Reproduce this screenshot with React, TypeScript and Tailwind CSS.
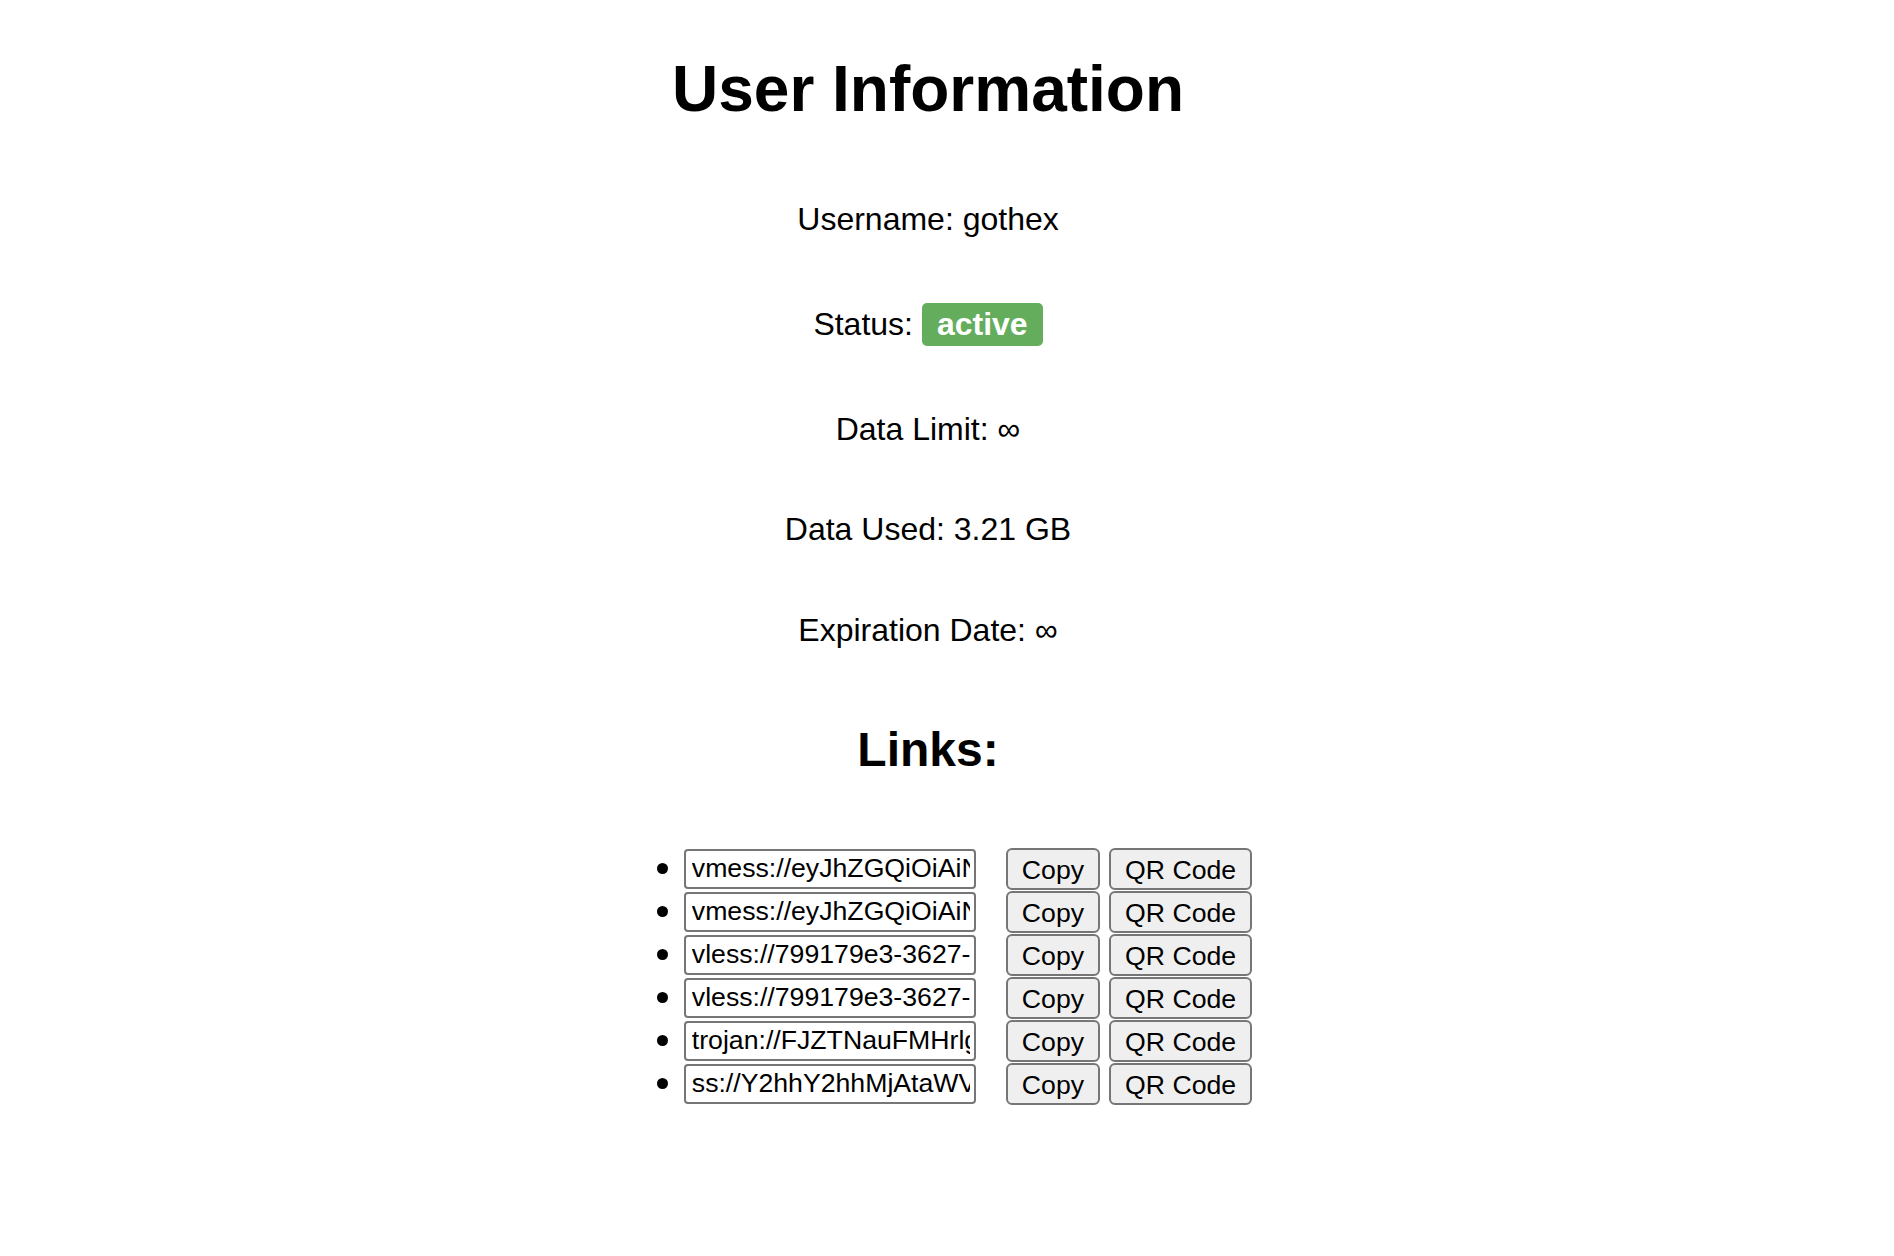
import React from 'react'

const links = [
  'vmess://eyJhZGQiOiAiNDUuMTU5LjIxLjE4MCIsICJhaWQiOiAiMCIsICJob3N0IjogIiJ9',
  'vmess://eyJhZGQiOiAiNDUuMTU5LjIxLjE4MCIsICJhaWQiOiAiMCIsICJob3N0IjogIiJ9',
  'vless://799179e3-3627-4d0a-9f8e-1a2b3c4d5e6f@45.159.21.180:443?security=tls',
  'vless://799179e3-3627-4d0a-9f8e-1a2b3c4d5e6f@45.159.21.180:8443?security=none',
  'trojan://FJZTNauFMHrlgQ2x@45.159.21.180:443?security=tls',
  'ss://Y2hhY2hhMjAtaWV0Zi1wb2x5MTMwNTpGSlpUTmF1Rk1IcmxnUTJ4@45.159.21.180:1080',
]

function InfoRow({ label, value }: { label: string; value: string }) {
  return (
    <p className="text-[32px] leading-[37px]">
      {label}: {value}
    </p>
  )
}

export default function App() {
  return (
    <div
      className="min-h-screen w-full bg-white text-black flex flex-col items-center pr-[38px]"
      style={{ fontFamily: '"Liberation Sans", Arial, Helvetica, sans-serif' }}
    >
      <h1 className="mt-[52px] text-[64px] leading-[74px] font-bold">User Information</h1>

      <div className="mt-[75px]">
        <InfoRow label="Username" value="gothex" />
      </div>

      {/* status row, badge sits on the text baseline */}
      <p className="mt-[65px] text-[32px] leading-[37px]">
        Status:{' '}
        <span className="inline-block align-baseline rounded-[5px] bg-[#64ad5d] text-white font-bold text-[32px] leading-[37px] pt-[3px] pb-[3px] px-[15px]">
          active
        </span>
      </p>

      <div className="mt-[65px]">
        <InfoRow label="Data Limit" value="∞" />
      </div>
      <div className="mt-[63px]">
        <InfoRow label="Data Used" value="3.21 GB" />
      </div>
      <div className="mt-[64px]">
        <InfoRow label="Expiration Date" value="∞" />
      </div>

      <h2 className="mt-[73px] text-[48px] leading-[55px] font-bold">Links:</h2>

      <ul className="mt-[70px] pl-[80px] flex flex-col">
        {links.map((link, i) => (
          <li key={i} className="h-[43px] flex items-center">
            <span className="w-[11px] h-[11px] rounded-full bg-black -ml-[27px] mr-[16px]" />
            <input
              type="text"
              readOnly
              value={link}
              className="w-[292px] h-[40px] border-2 border-[#767676] rounded-[4px] pl-[6px] pr-[4px] text-[26.67px] text-black bg-white outline-none"
            />
            <button className="ml-[30px] h-[42px] px-[14px] border-2 border-[#767676] rounded-[6px] bg-[#efefef] text-[26.67px] text-black">
              Copy
            </button>
            <button className="ml-[9px] h-[42px] px-[14px] border-2 border-[#767676] rounded-[6px] bg-[#efefef] text-[26.67px] text-black">
              QR Code
            </button>
          </li>
        ))}
      </ul>
    </div>
  )
}
